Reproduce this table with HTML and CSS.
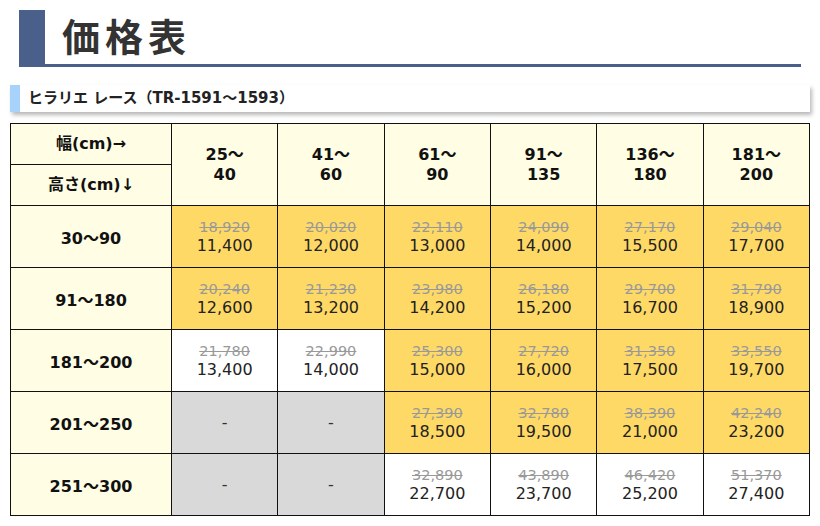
FILE: index.html
```html
<!DOCTYPE html>
<html lang="ja">
<head>
<meta charset="utf-8">
<title>価格表</title>
<link rel="stylesheet" href="styles.css">
</head>
<body>
<div class="page">
  <h1 class="title">価格表</h1>
  <h2 class="subtitle">ヒラリエ レース（TR-1591～1593）</h2>
  <table class="price">
    <colgroup>
      <col class="c-label">
      <col><col><col><col><col><col>
    </colgroup>
    <thead>
      <tr>
        <th class="corner top">幅(cm)→</th>
        <th rowspan="2">25～<br>40</th>
        <th rowspan="2">41～<br>60</th>
        <th rowspan="2">61～<br>90</th>
        <th rowspan="2">91～<br>135</th>
        <th rowspan="2">136～<br>180</th>
        <th rowspan="2">181～<br>200</th>
      </tr>
      <tr>
        <th class="corner bottom">高さ(cm)↓</th>
      </tr>
    </thead>
    <tbody>
      <tr>
        <th>30～90</th>
        <td class="sale"><s>18,920</s><span>11,400</span></td>
        <td class="sale"><s>20,020</s><span>12,000</span></td>
        <td class="sale"><s>22,110</s><span>13,000</span></td>
        <td class="sale"><s>24,090</s><span>14,000</span></td>
        <td class="sale"><s>27,170</s><span>15,500</span></td>
        <td class="sale"><s>29,040</s><span>17,700</span></td>
      </tr>
      <tr>
        <th>91～180</th>
        <td class="sale"><s>20,240</s><span>12,600</span></td>
        <td class="sale"><s>21,230</s><span>13,200</span></td>
        <td class="sale"><s>23,980</s><span>14,200</span></td>
        <td class="sale"><s>26,180</s><span>15,200</span></td>
        <td class="sale"><s>29,700</s><span>16,700</span></td>
        <td class="sale"><s>31,790</s><span>18,900</span></td>
      </tr>
      <tr>
        <th>181～200</th>
        <td><s>21,780</s><span>13,400</span></td>
        <td><s>22,990</s><span>14,000</span></td>
        <td class="sale"><s>25,300</s><span>15,000</span></td>
        <td class="sale"><s>27,720</s><span>16,000</span></td>
        <td class="sale"><s>31,350</s><span>17,500</span></td>
        <td class="sale"><s>33,550</s><span>19,700</span></td>
      </tr>
      <tr>
        <th>201～250</th>
        <td class="na">-</td>
        <td class="na">-</td>
        <td class="sale"><s>27,390</s><span>18,500</span></td>
        <td class="sale"><s>32,780</s><span>19,500</span></td>
        <td class="sale"><s>38,390</s><span>21,000</span></td>
        <td class="sale"><s>42,240</s><span>23,200</span></td>
      </tr>
      <tr>
        <th>251～300</th>
        <td class="na">-</td>
        <td class="na">-</td>
        <td><s>32,890</s><span>22,700</span></td>
        <td><s>43,890</s><span>23,700</span></td>
        <td><s>46,420</s><span>25,200</span></td>
        <td><s>51,370</s><span>27,400</span></td>
      </tr>
    </tbody>
  </table>
</div>
</body>
</html>
```

FILE: styles.css
```css
html, body {
  margin: 0;
  padding: 0;
  background: #fff;
}

.page {
  padding: 10px 10px 0 10px;
  font-family: "DejaVu Sans", "Noto Sans CJK JP", sans-serif;
  color: #111;
}

.title {
  margin: 0 9px 0 9px;
  height: 54px;
  border-left: 26px solid #4a5f8a;
  border-bottom: 3px solid #4a5f8a;
  padding-left: 17px;
  font-family: "Noto Sans CJK JP", sans-serif;
  font-size: 38px;
  font-weight: 700;
  letter-spacing: 5px;
  line-height: 50px;
  color: #333;
}

.subtitle {
  margin: 18px 0 0 0;
  height: 27px;
  border-left: 10px solid #a6d2fb;
  padding-left: 8px;
  box-shadow: 2px 3px 4px rgba(0, 0, 0, 0.28);
  font-family: "DejaVu Sans", "Noto Sans CJK JP", sans-serif;
  font-size: 15px;
  font-weight: 700;
  line-height: 27px;
  color: #222;
}

.price {
  margin-top: 11px;
  width: 800px;
  border-collapse: collapse;
  table-layout: fixed;
  border: 1px solid #111;
}

.price .c-label {
  width: 161px;
}

.price th,
.price td {
  border: 1px solid #111;
  text-align: center;
  vertical-align: middle;
  padding: 0;
}

.price thead th {
  background: #fffde4;
  font-size: 16px;
  font-weight: 700;
  line-height: 20px;
  color: #111;
}

.price thead th.corner {
  height: 40px;
}

.price tbody th {
  background: #fffde4;
  font-size: 16px;
  font-weight: 700;
  height: 61px;
}

.price td {
  background: #fff;
  font-size: 16px;
  line-height: 19px;
  color: #222;
}

.price td.sale {
  background: #ffd966;
}

.price td.na {
  background: #d9d9d9;
  color: #333;
}

.price td s {
  display: block;
  font-size: 14.5px;
  line-height: 17px;
  color: #999;
}

.price td span {
  display: block;
}
```
